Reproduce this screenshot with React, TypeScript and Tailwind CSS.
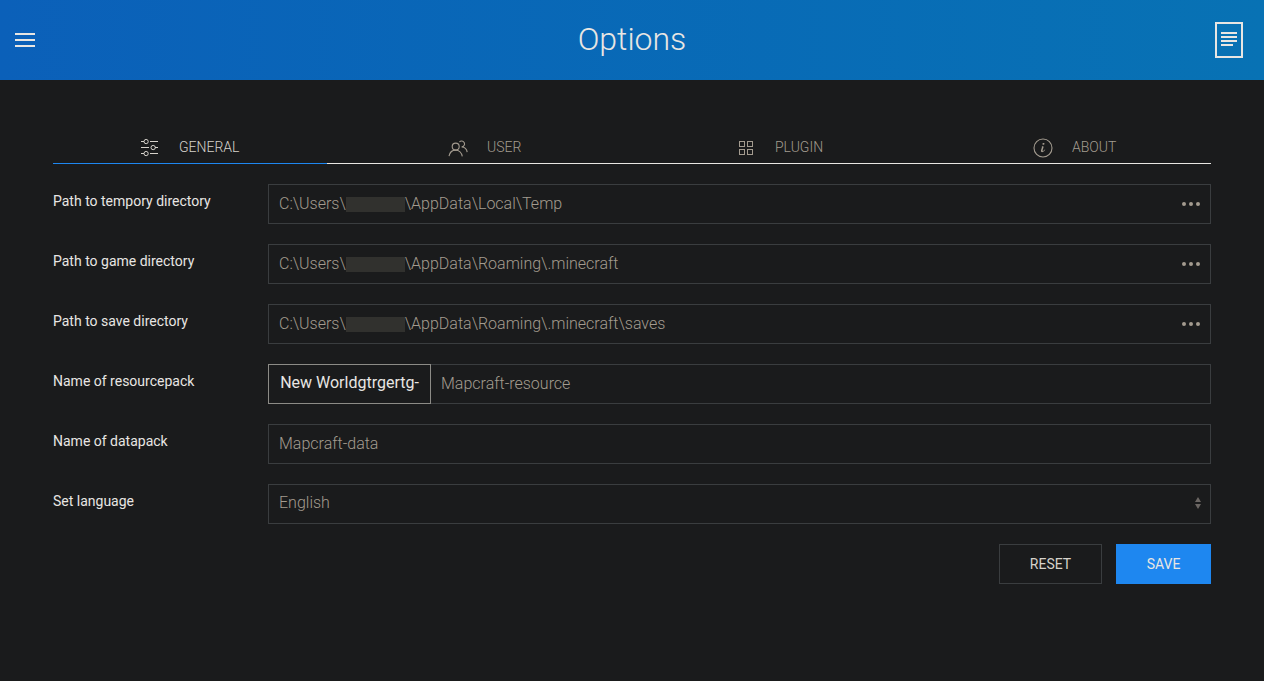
import React from "react";

type IconProps = { className?: string; children: React.ReactNode };

function Icon({ className = "", children }: IconProps) {
  return (
    <svg viewBox="0 0 20 20" fill="none" stroke="currentColor" className={`shrink-0 ${className}`}>
      {children}
    </svg>
  );
}

const settings = (
  <>
    <ellipse cx="6.11" cy="3.55" rx="2.11" ry="2.15" />
    <ellipse cx="6.11" cy="15.55" rx="2.11" ry="2.15" />
    <circle cx="13.15" cy="9.55" r="2.15" />
    <path
      stroke="none"
      fill="currentColor"
      d="M1 3h3v1H1zM10 3h8v1h-8zM1 9h8v1H1zM15 9h3v1h-3zM1 15h3v1H1zM10 15h8v1h-8z"
    />
  </>
);

const users = (
  <>
    <circle strokeWidth="1.1" cx="7.7" cy="8.6" r="3.5" />
    <path strokeWidth="1.1" d="M1,18.1 C1.7,14.6 4.4,12.1 7.6,12.1 C10.9,12.1 13.7,14.8 14.3,18.3" />
    <path
      strokeWidth="1.1"
      d="M11.4,4 C12.8,2.4 15.4,2.8 16.3,4.7 C17.2,6.6 15.7,8.9 13.6,8.9 C16.5,8.9 18.8,11.3 19.2,14.1"
    />
  </>
);

const thumbnails = (
  <>
    <rect x="3.5" y="3.5" width="5" height="5" />
    <rect x="11.5" y="3.5" width="5" height="5" />
    <rect x="11.5" y="11.5" width="5" height="5" />
    <rect x="3.5" y="11.5" width="5" height="5" />
  </>
);

const info = (
  <>
    <path
      stroke="none"
      fill="currentColor"
      d="M12.13,11.59 C11.97,12.84 10.35,14.12 9.1,14.16 C6.17,14.2 9.89,9.46 8.74,8.37 C9.3,8.16 10.62,7.83 10.62,8.81 C10.62,9.63 10.12,10.55 9.88,11.32 C8.66,15.16 12.13,11.15 12.14,11.18 C12.16,11.21 12.16,11.35 12.13,11.59 Z M11.56,5.67 C11.56,6.67 9.36,7.15 9.36,6.03 C9.36,5 11.56,4.54 11.56,5.67 Z"
    />
    <circle strokeWidth="1.1" cx="10" cy="10" r="9" />
  </>
);

const tabs = [
  { label: "GENERAL", icon: settings, box: "w-[274px] pl-[87px] border-[#1e87f0] text-[#d6d2cb]" },
  { label: "USER", icon: users, box: "w-[314px] pl-[121px] border-[#e8e6e3] text-[#a39b8f]" },
  { label: "PLUGIN", icon: thumbnails, box: "w-[284px] pl-[95px] border-[#e8e6e3] text-[#a39b8f]" },
  { label: "ABOUT", icon: info, box: "w-[286px] pl-[108px] border-[#e8e6e3] text-[#a39b8f]" },
];

const paths = [
  { label: "Path to tempory directory", rest: "\\AppData\\Local\\Temp" },
  { label: "Path to game directory", rest: "\\AppData\\Roaming\\.minecraft" },
  { label: "Path to save directory", rest: "\\AppData\\Roaming\\.minecraft\\saves" },
];

function Row({ label, children }: { label: string; children: React.ReactNode }) {
  return (
    <div className="flex h-10">
      <label className="w-[215px] shrink-0 pt-[7px] text-sm leading-[21px] text-[#e8e6e3]">{label}</label>
      {children}
    </div>
  );
}

const field = "flex h-10 min-w-0 flex-1 items-center border border-[#3a3d3f] px-2.5 text-base font-light text-[#a39b8f]";

export default function App() {
  return (
    <div className="flex h-[681px] w-[1264px] flex-col overflow-hidden bg-[#1a1b1c] font-['Roboto',sans-serif]">
      <header className="flex h-20 shrink-0 items-center justify-between bg-linear-to-r from-[#0b60b9] to-[#0872b4] pr-[15px] pl-[15px] text-[#e8e6e3]">
        <button className="flex w-10 items-center" aria-label="Menu">
          <Icon className="size-5">
            <path stroke="none" fill="currentColor" d="M0 3h20v2H0zM0 9h20v2H0zM0 15h20v2H0z" />
          </Icon>
        </button>
        <h1 className="pb-[2px] text-[32px] leading-[42px] font-light">Options</h1>
        <Icon className="size-10">
          <rect x="3.5" y="1.5" width="13" height="17" />
          <path d="M6 6.5h8M6 8.5h8M6 10.5h8M6 12.5h6" />
        </Icon>
      </header>

      <main className="flex flex-col px-[53px] pt-[50px]">
        <nav className="flex h-[34px]">
          {tabs.map((t) => (
            <a key={t.label} className={`flex border-b pt-[7px] ${t.box}`}>
              <Icon className="mt-[1px] size-5">{t.icon}</Icon>
              <span className="ml-[19px] text-sm leading-5 font-light">{t.label}</span>
            </a>
          ))}
        </nav>

        <form className="mt-5 flex flex-col gap-5">
          {paths.map((p) => (
            <Row key={p.label} label={p.label}>
              <div className={field}>
                <span>C:\Users\</span>
                <span className="h-[15px] w-[59px] bg-[#31312e]" />
                <span className="flex-1">{p.rest}</span>
                <Icon className="-mr-[1px] size-5">
                  <path
                    stroke="none"
                    fill="currentColor"
                    d="M1 10a2 2 0 1 0 4 0a2 2 0 1 0-4 0M8 10a2 2 0 1 0 4 0a2 2 0 1 0-4 0M15 10a2 2 0 1 0 4 0a2 2 0 1 0-4 0"
                  />
                </Icon>
              </div>
            </Row>
          ))}
          <Row label="Name of resourcepack">
            <div className="flex h-10 w-[163px] shrink-0 justify-center border border-[#8c8b86] pt-[6px] text-base leading-6 text-[#e8e6e3]">
              New Worldgtrgertg-
            </div>
            <div className={`${field} border-l-0`}>Mapcraft-resource</div>
          </Row>
          <Row label="Name of datapack">
            <div className={field}>Mapcraft-data</div>
          </Row>
          <Row label="Set language">
            <div className={`${field} pr-0`}>
              <span className="flex-1 pb-[2px]">English</span>
              <svg viewBox="0 0 24 16" className="h-4 w-6 text-[#6b6663]" fill="currentColor">
                <path d="M12 1L9 6h6zM12 13L9 8h6z" />
              </svg>
            </div>
          </Row>
          <div className="flex justify-end gap-[14px] text-sm leading-[38px] font-normal">
            <button type="button" className="h-10 w-[103px] border border-[#3a3d3f] text-[#d6d2cb]">
              RESET
            </button>
            <button type="button" className="h-10 w-[95px] bg-[#1e87f0] text-[#e8e6e3]">
              SAVE
            </button>
          </div>
        </form>
      </main>
    </div>
  );
}
